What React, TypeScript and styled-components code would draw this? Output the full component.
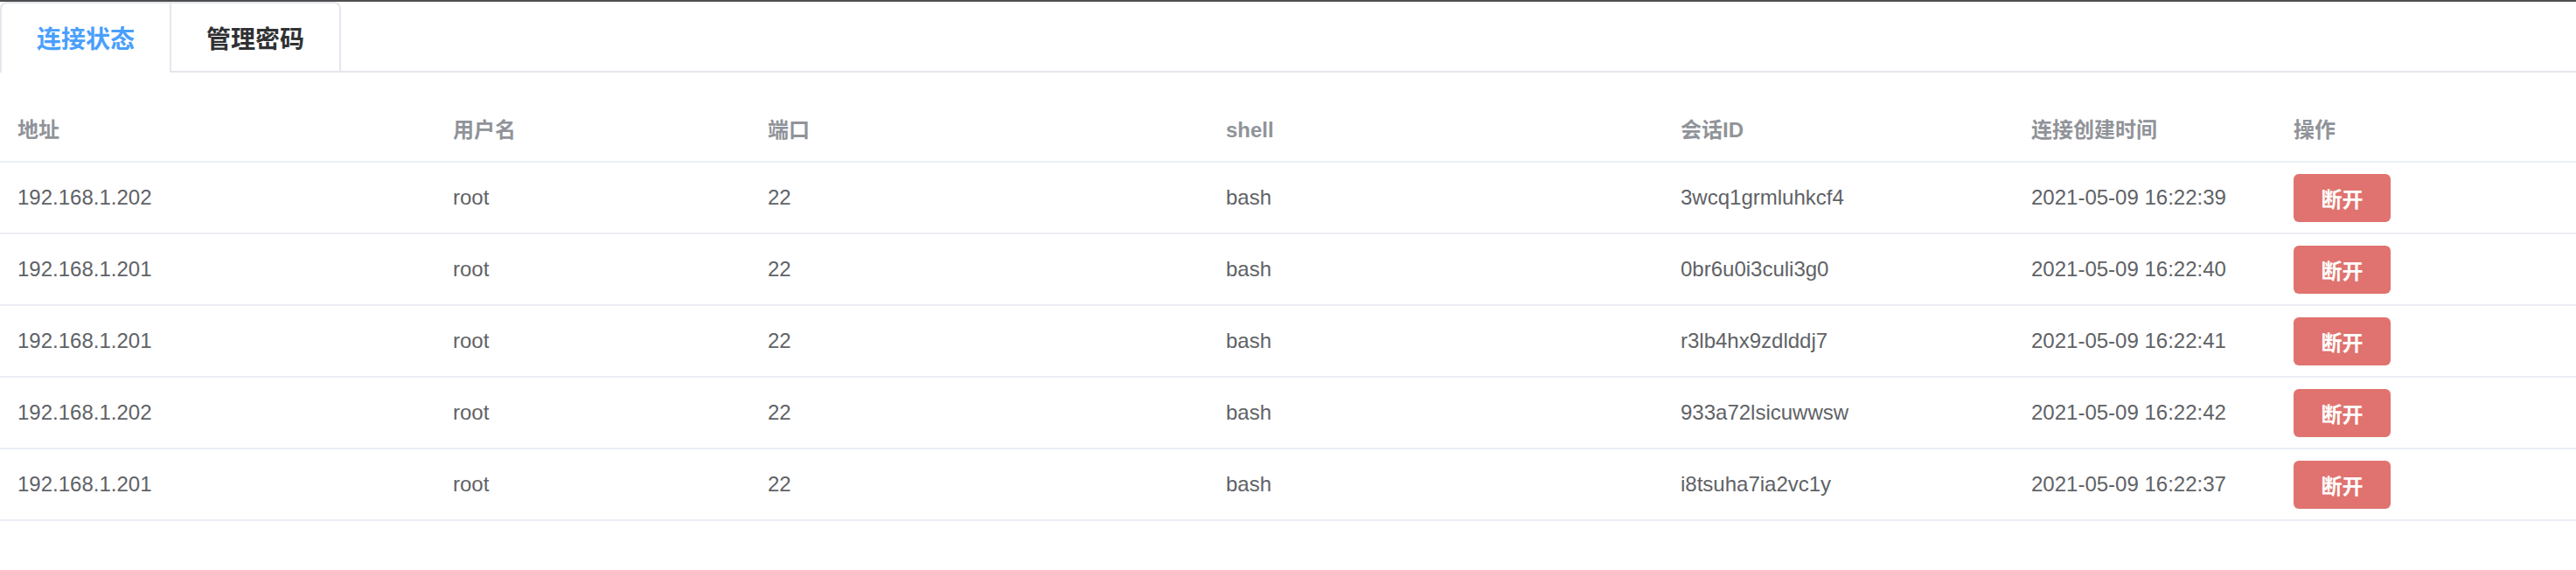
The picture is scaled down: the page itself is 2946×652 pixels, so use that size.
import React from "react";
import styled, { createGlobalStyle } from "styled-components";

const GlobalStyle = createGlobalStyle`
  html, body {
    margin: 0;
    padding: 0;
    background: #ffffff;
  }
  body {
    font-family: "Liberation Sans", "Noto Sans CJK SC", sans-serif;
  }
`;

const Page = styled.div`
  width: 2946px;
  min-height: 652px;
  background: #ffffff;
  border-top: 2px solid #4f4f4f;
  box-sizing: border-box;
`;

const TabsHeader = styled.div`
  display: flex;
  align-items: stretch;
  height: 81px;
  margin-bottom: 30px;
`;

const TabNav = styled.div`
  display: flex;
  border: 2px solid #e4e7ed;
  border-bottom: none;
  border-radius: 8px 8px 0 0;
`;

const TabItem = styled.div<{ $active?: boolean; $first?: boolean }>`
  height: 77px;
  padding: 0 40px;
  display: flex;
  align-items: center;
  font-family: "Noto Sans CJK SC", sans-serif;
  font-size: 28px;
  font-weight: 600;
  color: ${(p) => (p.$active ? "#4a9ffc" : "#303133")};
  border-left: ${(p) => (p.$first ? "none" : "2px solid #e4e7ed")};
  border-bottom: 2px solid ${(p) => (p.$active ? "#ffffff" : "#e4e7ed")};
  cursor: pointer;
`;

const TabFiller = styled.div`
  flex: 1;
  border-bottom: 2px solid #e4e7ed;
`;

const Table = styled.div`
  width: 100%;
`;

const Row = styled.div<{ $head?: boolean }>`
  display: grid;
  grid-template-columns: 498px 360px 524px 520px 401px 300px 1fr;
  height: ${(p) => (p.$head ? "71px" : "80px")};
  border-bottom: 2px solid #ebeef5;
  align-items: center;
`;

const Cell = styled.div<{ $head?: boolean }>`
  padding: 0 20px;
  font-size: 24px;
  line-height: 46px;
  white-space: nowrap;
  font-family: "Liberation Sans", "Noto Sans CJK SC", sans-serif;
  color: ${(p) => (p.$head ? "#909399" : "#606266")};
  font-weight: ${(p) => (p.$head ? 700 : 400)};
`;

const DangerButton = styled.button`
  width: 111px;
  height: 55px;
  border: none;
  border-radius: 6px;
  background: #e0736f;
  color: #ffffff;
  font-family: "Noto Sans CJK SC", sans-serif;
  font-size: 24px;
  font-weight: 600;
  padding: 0;
  display: flex;
  align-items: center;
  justify-content: center;
  cursor: pointer;
`;

const headers = ["地址", "用户名", "端口", "shell", "会话ID", "连接创建时间", "操作"];

const rows = [
  ["192.168.1.202", "root", "22", "bash", "3wcq1grmluhkcf4", "2021-05-09 16:22:39"],
  ["192.168.1.201", "root", "22", "bash", "0br6u0i3culi3g0", "2021-05-09 16:22:40"],
  ["192.168.1.201", "root", "22", "bash", "r3lb4hx9zdlddj7", "2021-05-09 16:22:41"],
  ["192.168.1.202", "root", "22", "bash", "933a72lsicuwwsw", "2021-05-09 16:22:42"],
  ["192.168.1.201", "root", "22", "bash", "i8tsuha7ia2vc1y", "2021-05-09 16:22:37"],
];

export default function App() {
  return (
    <>
      <GlobalStyle />
      <Page>
        <TabsHeader>
          <TabNav>
            <TabItem $active $first>连接状态</TabItem>
            <TabItem>管理密码</TabItem>
          </TabNav>
          <TabFiller />
        </TabsHeader>
        <Table>
          <Row $head>
            {headers.map((h) => (
              <Cell $head key={h}>
                {h}
              </Cell>
            ))}
          </Row>
          {rows.map((r, i) => (
            <Row key={i}>
              {r.map((c, j) => (
                <Cell key={j}>{c}</Cell>
              ))}
              <Cell>
                <DangerButton>断开</DangerButton>
              </Cell>
            </Row>
          ))}
        </Table>
      </Page>
    </>
  );
}
